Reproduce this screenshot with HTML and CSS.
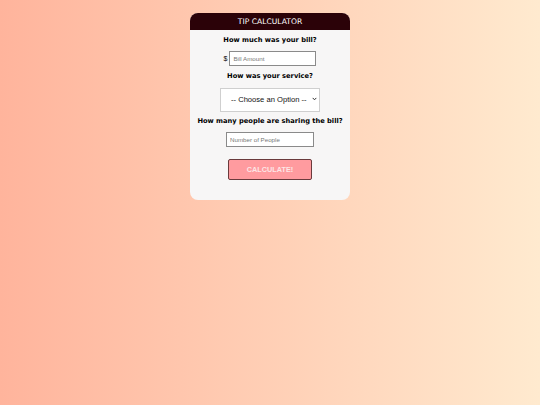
FILE: index.html
```html
<!DOCTYPE html>
<html>
<head>
<meta charset="utf-8">
<link rel="stylesheet" href="styles.css">
</head>
<body>
<div class="card">
  <div class="header">TIP CALCULATOR</div>
  <div class="body">
    <p class="q">How much was your bill?</p>
    <div class="row"><span class="cur">$</span><input class="inp bill" type="text" placeholder="Bill Amount"></div>
    <p class="q">How was your service?</p>
    <div class="selwrap">
      <select class="sel"><option>-- Choose an Option --</option></select>
      <svg class="chev" width="5" height="4" viewBox="0 0 5 4"><path d="M0.7 0.9 L2.5 2.8 L4.3 0.9" fill="none" stroke="#333" stroke-width="1"/></svg>
    </div>
    <p class="q">How many people are sharing the bill?</p>
    <div class="row"><input class="inp people" type="text" placeholder="Number of People"></div>
    <button class="btn">CALCULATE!</button>
  </div>
</div>
</body>
</html>
```
FILE: styles.css
```css
html, body { margin: 0; height: 100%; }
body {
  background: linear-gradient(to right, #ffb49c, #ffeacf);
  font-family: "DejaVu Sans", sans-serif;
  display: flex;
  justify-content: center;
  align-items: flex-start;
}
.card {
  margin-top: 13px;
  width: 160px;
  height: 187px;
  background: #f7f6f6;
  border-radius: 8px;
  overflow: hidden;
}
.header {
  background: #2b0208;
  color: #fff;
  height: 17px;
  line-height: 17px;
  text-align: center;
  font-size: 7.6px;
  font-weight: normal;
}
.body {
  display: flex;
  flex-direction: column;
  align-items: center;
}
.q {
  margin: 5px 0 0;
  font-weight: bold;
  font-size: 6.7px;
  line-height: 10px;
  white-space: nowrap;
  color: #000;
}
.row { display: flex; align-items: center; margin-top: 6px; }
.cur { font-size: 7px; margin-right: 2px; font-family: "Liberation Sans", sans-serif; }
.inp {
  box-sizing: border-box;
  height: 15px;
  border: 1.5px solid #8a8a8a;
  padding: 0 0 0 3px;
  font-family: "Liberation Sans", sans-serif;
  font-size: 6.2px;
  background: #fff;
  outline: none;
}
.inp::placeholder { color: #777; }
.bill { width: 87px; }
.people { width: 88px; }
.selwrap { position: relative; margin-top: 6px; width: 100px; height: 24px; }
.sel {
  -webkit-appearance: none;
  appearance: none;
  box-sizing: border-box;
  width: 100px;
  height: 24px;
  border: 1px solid #cfcfcf;
  border-radius: 0;
  background: #fff;
  font-family: "Liberation Sans", sans-serif;
  font-size: 7.6px;
  color: #111;
  padding: 0 0 0 10px;
  margin: 0;
}
.chev { position: absolute; right: 3px; top: 10px; }
.btn {
  margin-top: 12px;
  width: 84px;
  height: 21px;
  background: #ff9b9f;
  border: 1px solid #6a3a3c;
  color: #fde6e6;
  font-weight: bold;
  font-family: "Liberation Sans", sans-serif;
  font-size: 7.3px;
  border-radius: 2px;
  padding: 0;
}
```
